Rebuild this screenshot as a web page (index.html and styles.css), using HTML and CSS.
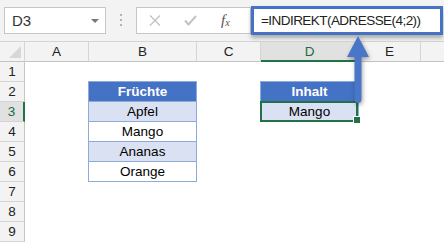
FILE: index.html
```html
<!DOCTYPE html>
<html lang="de">
<head>
    <meta charset="UTF-8">
    <meta name="viewport" content="width=device-width, initial-scale=1.0">
    <title>INDIREKT ADRESSE</title>
    <link rel="stylesheet" href="styles.css">
</head>
<body>

    <!-- Namensfeld + Bearbeitungsleiste -->
    <div class="toolbar">
        <div class="namebox">
            <span>D3</span>
            <span class="caret"></span>
        </div>
        <div class="grip"><i></i><i></i><i></i></div>
        <div class="fxbox">
            <svg class="btn" width="12" height="11" viewBox="0 0 12 11">
                <path d="M1 0.5 L11 10.5 M11 0.5 L1 10.5" stroke="#c3c3c3" stroke-width="1.4" fill="none"/>
            </svg>
            <svg class="btn" width="13" height="11" viewBox="0 0 13 11">
                <path d="M1 5.5 L4.5 9.5 L12 1" stroke="#c3c3c3" stroke-width="2" fill="none"/>
            </svg>
            <span class="fx">f<sub>x</sub></span>
        </div>
        <div class="formula">=INDIREKT(ADRESSE(4;2))</div>
    </div>

    <!-- Tabelle -->
    <div class="sheet">
        <div class="colhead corner"><span class="tri"></span></div>
        <div class="colhead">A</div>
        <div class="colhead">B</div>
        <div class="colhead">C</div>
        <div class="colhead on">D</div>
        <div class="colhead">E</div>
        <div class="colhead last"></div>

        <div class="rowhead">1</div>
        <div class="rowhead">2</div>
        <div class="rowhead on">3</div>
        <div class="rowhead">4</div>
        <div class="rowhead">5</div>
        <div class="rowhead">6</div>
        <div class="rowhead">7</div>
        <div class="rowhead">8</div>
        <div class="rowhead">9</div>

        <div class="block fruits">
            <div class="cell head">Früchte</div>
            <div class="cell band">Apfel</div>
            <div class="cell">Mango</div>
            <div class="cell band">Ananas</div>
            <div class="cell">Orange</div>
        </div>

        <div class="block result">
            <div class="cell head">Inhalt</div>
            <div class="cell band active">Mango</div>
        </div>
    </div>

    <!-- Pfeil von der Formel zur Zelle -->
    <svg class="arrow" width="34" height="80" viewBox="0 0 34 80">
        <path d="M17 3 L28 24 L20.5 24 L20.5 66 Q20.5 70 17 70 Q13.5 70 13.5 66 L13.5 24 L6 24 Z" fill="#4a76c8"/>
    </svg>

</body>
</html>
```

FILE: styles.css
```css
body {
    margin: 0;
    width: 444px;
    height: 242px;
    overflow: hidden;
    background: #ffffff;
    font-family: "Liberation Sans", Arial, sans-serif;
    position: relative;
}

/* Bearbeitungsleiste */
.toolbar {
    display: flex;
    align-items: flex-start;
    height: 42px;
    padding-top: 7px;
    box-sizing: border-box;
    background: #f3f3f3;
    border-bottom: 1px solid #d5d5d5;
}

.namebox {
    margin-left: 4px;
    width: 102px;
    height: 27px;
    box-sizing: border-box;
    background: #fff;
    border: 1px solid #c6c6c6;
    display: flex;
    align-items: center;
    justify-content: space-between;
    padding: 0 6px 0 7px;
    font-size: 15px;
    color: #333;
}

.caret {
    width: 0;
    height: 0;
    border-left: 4px solid transparent;
    border-right: 4px solid transparent;
    border-top: 4px solid #777;
}

.grip {
    width: 30px;
    display: flex;
    flex-direction: column;
    align-items: center;
    gap: 3px;
    padding-top: 7px;
}

.grip i {
    width: 2px;
    height: 2px;
    background: #b5b5b5;
}

.fxbox {
    width: 115px;
    height: 27px;
    box-sizing: border-box;
    background: #fff;
    border: 1px solid #c6c6c6;
    display: flex;
    align-items: center;
    padding-left: 12px;
    gap: 23px;
}

.fx {
    font-family: "Liberation Serif", serif;
    font-style: italic;
    font-size: 15px;
    color: #555;
    margin-left: 1px;
}

.fx sub {
    font-size: 10px;
    vertical-align: -1px;
}

.formula {
    margin-top: -1px;
    width: 192px;
    height: 29px;
    box-sizing: border-box;
    background: #fff;
    border: 3px solid #4472c4;
    box-shadow: 0 3px 4px rgba(0, 0, 0, 0.3);
    padding-left: 7px;
    display: flex;
    align-items: center;
    font-size: 13.5px;
    letter-spacing: -0.55px;
    color: #222;
    position: relative;
    z-index: 2;
}

/* Raster */
.sheet {
    display: grid;
    grid-template-columns: 25px 64px 108px 64px 98px 62px 1fr;
    grid-template-rows: repeat(10, 20px);
    font-size: 13.5px;
}

.colhead {
    background: #f3f3f3;
    border-right: 1px solid #d5d5d5;
    border-bottom: 1px solid #c4c4c4;
    display: flex;
    align-items: center;
    justify-content: center;
    color: #222;
}

.colhead.last {
    border-right: none;
}

.colhead.on {
    background: #e1e1e1;
    color: #1e6b40;
    border-bottom: 2px solid #217346;
}

.corner {
    position: relative;
}

.tri {
    position: absolute;
    right: 3px;
    bottom: 3px;
    width: 0;
    height: 0;
    border-left: 12px solid transparent;
    border-bottom: 12px solid #d7d7d7;
}

.rowhead {
    grid-column: 1;
    background: #f3f3f3;
    border-right: 1px solid #c4c4c4;
    border-bottom: 1px solid #d5d5d5;
    display: flex;
    align-items: center;
    justify-content: center;
    color: #222;
}

.rowhead.on {
    background: #e1e1e1;
    color: #1e6b40;
    border-right: 2px solid #217346;
}

/* Datenblöcke */
.block {
    margin: -1px 0 0 -1px;
    border-left: 1px solid #8eaadb;
    border-top: 1px solid #8eaadb;
    display: flex;
    flex-direction: column;
}

.fruits {
    grid-column: 3;
    grid-row: 3 / span 5;
}

.result {
    grid-column: 5;
    grid-row: 3 / span 2;
}

.cell {
    height: 20px;
    box-sizing: border-box;
    border-right: 1px solid #8eaadb;
    border-bottom: 1px solid #8eaadb;
    display: flex;
    align-items: center;
    justify-content: center;
    color: #000;
}

.cell.head {
    background: #4472c4;
    color: #fff;
    font-weight: bold;
}

.cell.band {
    background: #d9e1f2;
}

.cell.active {
    position: relative;
}

.cell.active::after {
    content: "";
    position: absolute;
    left: -1px;
    top: -1px;
    right: 0;
    bottom: -1px;
    border: 2px solid #217346;
}

.cell.active::before {
    content: "";
    position: absolute;
    right: -2px;
    bottom: -2px;
    width: 6px;
    height: 6px;
    background: #217346;
    box-shadow: -1px -1px 0 #fff;
    z-index: 1;
}

/* Pfeil */
.arrow {
    position: absolute;
    left: 341px;
    top: 33px;
    filter: drop-shadow(1px 2px 2px rgba(0, 0, 0, 0.35));
    z-index: 3;
}
```
